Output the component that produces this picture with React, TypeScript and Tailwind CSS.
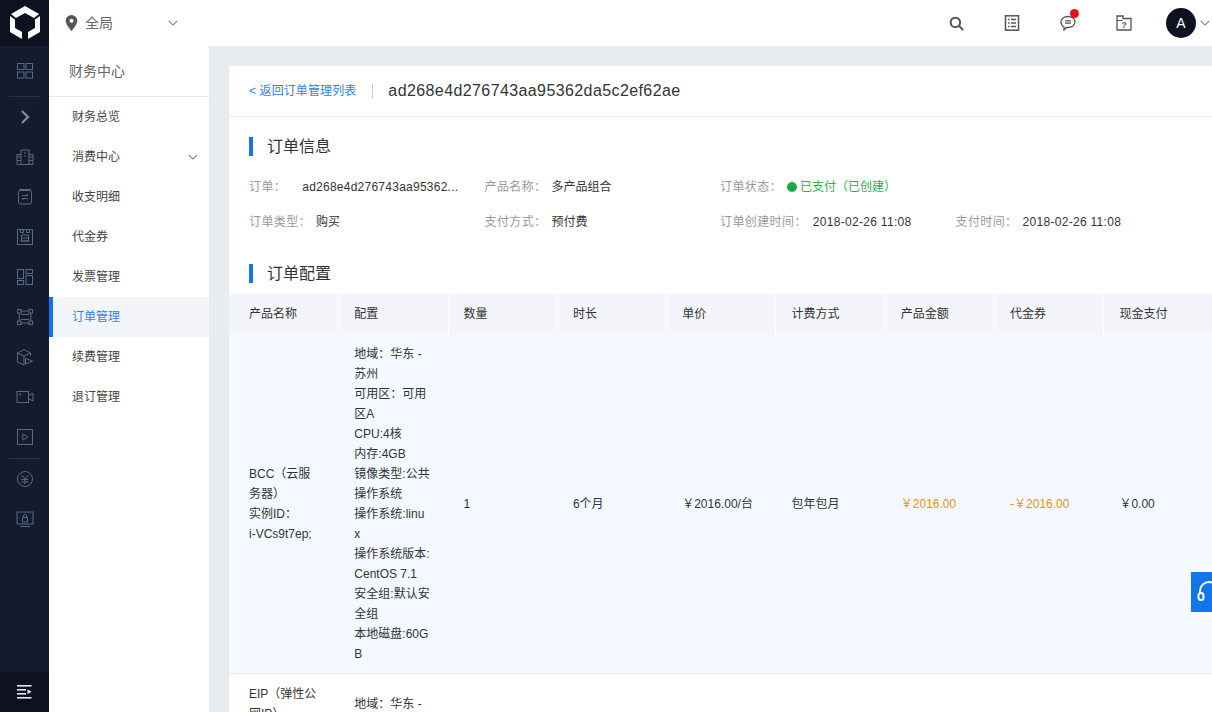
import React from "react";

const font = { fontFamily: '"Liberation Sans", "Noto Sans CJK SC", sans-serif' };

const S = ({ children, className = "w-[18px] h-[18px]" }: { children: React.ReactNode; className?: string }) => (
  <svg viewBox="0 0 18 18" fill="none" stroke="currentColor" strokeWidth="1" className={className}>
    {children}
  </svg>
);

const railIcons: React.ReactNode[] = [
  <S><rect x="1.5" y="1.5" width="6.5" height="6" /><rect x="10" y="1.5" width="6.5" height="6" /><rect x="1.5" y="10" width="6.5" height="6" /><rect x="10" y="10" width="6.5" height="6" /></S>,
  <S><path d="M1 16.5V6.5h4M17 16.5V6.5h-4M5 16.5V2h8v14.500M1 16.500h16M5 9H1M5 12.500H1M13 9h4M13 12.500h4M8 5h2M8 8h2" /></S>,
  <S><rect x="2.500" y="2.500" width="13" height="13.500" rx="2" /><path d="M3 1.500h12M6 7.500h6l-1.500-1.500M12 10.500H6l1.500 1.500" /></S>,
  <S><rect x="1.500" y="1.500" width="15" height="15" /><path d="M4.500 1.500v3h3v-3M10.500 1.500v3h3v-3M4.500 13h9M5.500 7h7v6h-7zM5.500 10h7" /></S>,
  <S><rect x="1.500" y="1.500" width="6" height="9" /><rect x="10" y="1.500" width="6.500" height="4" /><rect x="10" y="7.500" width="6.500" height="9" /><rect x="1.500" y="12.500" width="6" height="4" /></S>,
  <S><rect x="1.500" y="1.500" width="3.500" height="3.500" /><rect x="13" y="1.500" width="3.500" height="3.500" /><rect x="1.500" y="13" width="3.500" height="3.500" /><rect x="13" y="13" width="3.500" height="3.500" /><path d="M5 3h8M5 15h8M3.200 5v8M14.800 5v8M5 6.500h8M5 11.500h8" /></S>,
  <S><path d="M1.500 5L8 1.500 14.500 5 8 8zM1.500 5v9L8 17V8M14.500 5v3M9.500 10.500v5.500l7-3z" /></S>,
  <S><rect x="1" y="3.500" width="11.500" height="11" /><path d="M12.500 7.500l4.500-2.500v8l-4.500-2.500" /><circle cx="4" cy="6.500" r="0.700" /></S>,
  <S><rect x="1.500" y="1.500" width="15" height="15" /><path d="M6.800 5.800v6.400l5-3.200z" /></S>,
  <S><circle cx="9" cy="9" r="7.500" /><path d="M5.500 5L9 9l3.500-4M5.500 9.500h7M5.500 12h7M9 9v5" /></S>,
  <S><rect x="1" y="2" width="16" height="12" /><path d="M4 16.500h10M6.500 7.500h5v4.500h-5zM7.500 7.500V6a1.500 1.500 0 0 1 3 0v1.500" /></S>,
];

const subMenu = ["财务总览", "消费中心", "收支明细", "代金券", "发票管理", "订单管理", "续费管理", "退订管理"];

const heads = ["产品名称", "配置", "数量", "时长", "单价", "计费方式", "产品金额", "代金券", "现金支付"];
const configLines = ["地域：华东 -", "苏州", "可用区：可用", "区A", "CPU:4核", "内存:4GB", "镜像类型:公共", "操作系统", "操作系统:linu", "x", "操作系统版本:", "CentOS 7.1", "安全组:默认安", "全组", "本地磁盘:60G", "B"];

function Info({ label, value, className, valueClass = "text-[#333]" }: { label: string; value: React.ReactNode; className: string; valueClass?: string }) {
  return (
    <div className={`flex items-center whitespace-nowrap ${className}`}>
      <span className="text-[#999] tracking-[0.4px]">{label}</span>
      <span className={valueClass}>{value}</span>
    </div>
  );
}

function SectionTitle({ children }: { children: React.ReactNode }) {
  return (
    <div className="flex items-center gap-[14px] pl-5 h-[19px]">
      <span className="w-1 h-[19px] bg-[#1275ea]" />
      <span className="text-base text-[#333] leading-[19px]">{children}</span>
    </div>
  );
}

function Lines({ lines }: { lines: string[] }) {
  return (
    <>
      {lines.map((l, i) => (
        <div key={i} className="whitespace-nowrap">{l}</div>
      ))}
    </>
  );
}

export default function App() {
  const cellW = "w-[109.300px]";
  return (
    <div style={font} className="relative flex h-[712px] w-[1212px] overflow-hidden bg-[#e8ebef] text-xs text-[#333]">
      {/* rail */}
      <aside className="flex h-full w-[49px] shrink-0 flex-col bg-[#131b2e] text-[#5d6981]">
        <div className="flex h-[46px] items-center justify-center bg-[#0e1220]">
          <svg viewBox="0 0 32 34" className="h-[34px] w-[32px]" fill="#fff">
            <path d="M16 0L30 8 25 12 16 7 7 12 2 8z" />
            <path d="M1 10l5 3.500V22l7 4v7L1 26z" />
            <path d="M31 10l-5 3.500V22l-7 4v7l12-7z" />
          </svg>
        </div>
        <div className="flex h-[50px] items-center justify-center">{railIcons[0]}</div>
        <div className="mx-[9px] h-px bg-[#2a3346]" />
        <div className="flex h-10 items-center justify-center text-[#8790a3]">
          <svg viewBox="0 0 18 18" fill="none" stroke="currentColor" strokeWidth="2" className="h-[18px] w-[18px]"><path d="M6 3l6 6-6 6" /></svg>
        </div>
        {railIcons.slice(1, 9).map((ic, i) => (
          <div key={i} className="flex h-10 items-center justify-center">{ic}</div>
        ))}
        <div className="mx-[9px] mt-[1px] h-px bg-[#2a3346]" />
        {railIcons.slice(9).map((ic, i) => (
          <div key={i} className="flex h-10 items-center justify-center">{ic}</div>
        ))}
        <div className="mt-auto flex h-10 items-center justify-center bg-[#0e1220]">
          <svg viewBox="0 0 15 14" fill="#e4e7ec" className="h-[14px] w-[15px]">
            <rect x="0" y="0" width="14.500" height="1.600" />
            <rect x="0" y="4" width="9" height="1.600" />
            <rect x="0" y="8" width="9" height="1.600" />
            <rect x="0" y="12" width="14.500" height="1.600" />
            <path d="M10.500 4.200l4 2.500-4 2.500z" />
          </svg>
        </div>
      </aside>

      <div className="flex min-w-0 flex-1 flex-col">
        {/* top bar */}
        <header className="flex h-[46px] shrink-0 items-center bg-white">
          <div className="ml-[16px] flex items-center text-[#666]">
            <svg viewBox="0 0 14 18" fill="#555" className="h-4 w-[13px]"><path fillRule="evenodd" d="M7 0a6.500 6.500 0 0 1 6.500 6.500C13.500 11 7 18 7 18S.5 11 .5 6.500A6.500 6.500 0 0 1 7 0zm0 4.200a2.300 2.300 0 1 0 0 4.600 2.300 2.300 0 0 0 0-4.600z" /></svg>
            <span className="ml-[7px] text-sm">全局</span>
            <svg viewBox="0 0 12 8" fill="none" stroke="#777" strokeWidth="1.300" className="ml-[55px] h-2 w-[10px]"><path d="M1 1.500l5 5 5-5" /></svg>
          </div>
          <div className="ml-auto flex items-center text-[#555]">
            <svg viewBox="0 0 16 16" fill="none" stroke="#555" strokeWidth="2.200" className="h-[15px] w-[15px]"><circle cx="6.800" cy="6.800" r="5" /><path d="M10.500 10.500L15 15" /></svg>
            <svg viewBox="0 0 16 16" fill="none" stroke="#555" className="ml-[40px] h-4 w-4"><rect x="1.500" y="0.800" width="13" height="14.400" strokeWidth="1.500" /><path d="M4 4.500h1.500M7 4.500h5M4 8h1.500M7 8h5M4 11.500h1.500M7 11.500h5" strokeWidth="1.300" /></svg>
            <div className="relative ml-[40px] h-4 w-4">
              <svg viewBox="0 0 16 16" fill="none" stroke="#555" strokeWidth="1.300" className="h-4 w-4"><path d="M8 1.500c4 0 7 2.400 7 5.500s-3 5.500-7 5.500H6.500L4 15v-3C2 11 1 9 1 7c0-3.100 3-5.500 7-5.500z" /><path d="M5 5.800h6M5 8.200h6" /></svg>
              <span className="absolute left-[10px] top-[-6px] h-[9px] w-[9px] rounded-full bg-[#e60f1f]" />
            </div>
            <svg viewBox="0 0 16 16" fill="none" stroke="#555" className="ml-[40px] h-4 w-4"><path d="M1 15V1h6v2.500h8V15z" strokeWidth="1.300" /><path d="M1 5.500h5.500" strokeWidth="1" /><text x="8" y="13" fontSize="8.500" fill="#555" stroke="none" textAnchor="middle" fontWeight="700">?</text></svg>
            <span className="ml-[34px] flex h-[30px] w-[30px] items-center justify-center rounded-full bg-[#0e1220] text-sm text-white">A</span>
            <svg viewBox="0 0 12 8" fill="none" stroke="#777" strokeWidth="1.300" className="ml-[4px] mr-[2px] h-2 w-[10px]"><path d="M1 1.500l5 5 5-5" /></svg>
          </div>
        </header>

        <div className="flex min-h-0 flex-1">
          {/* side menu */}
          <nav className="w-[161px] shrink-0 border-r border-[#e6e9ed] bg-white">
            <div className="flex h-[51px] items-center border-b border-[#e6e9ed] pl-5 text-sm text-[#666]">财务中心</div>
            {subMenu.map((m, i) => (
              <div
                key={m}
                className={
                  m === "订单管理"
                    ? "flex h-10 items-center border-l-4 border-[#1275ea] bg-[#f3f5fa] pl-[19px] text-[#2f80f0]"
                    : "flex h-10 items-center pl-[23px] text-[#444]"
                }
              >
                {m}
                {i === 1 && (
                  <svg viewBox="0 0 12 8" fill="none" stroke="#777" strokeWidth="1.300" className="ml-auto mr-[11px] h-2 w-[10px]"><path d="M1 1.500l5 5 5-5" /></svg>
                )}
              </div>
            ))}
          </nav>

          {/* content */}
          <main className="min-w-0 flex-1 overflow-hidden pl-[19px] pt-5">
            <div className="bg-white">
              <div className="flex h-[51px] items-center border-b border-[#e8ebef] pl-5">
                <span className="text-[#2f80f0] tracking-[0.1px]">&lt; 返回订单管理列表</span>
                <span className="ml-4 h-[15px] w-px bg-[#ccc]" />
                <span className="ml-[15px] text-base text-[#333] tracking-[0.4px]">ad268e4d276743aa95362da5c2ef62ae</span>
              </div>
              <div className="h-[20px]" />
              <SectionTitle>订单信息</SectionTitle>
              <div className="mt-[23px] flex h-[16px] pl-5">
                <Info className="w-[235.500px]" label="订单：" value="ad268e4d276743aa95362..." valueClass="ml-[16px] text-[#333] tracking-[0.25px]" />
                <Info className="w-[235.500px]" label="产品名称：" value="多产品组合" valueClass="ml-[5px] text-[#333]" />
                <Info
                  className="flex-1"
                  label="订单状态："
                  valueClass="ml-[5px] text-[#27b14f]"
                  value={
                    <span className="flex items-center">
                      <span className="mr-[3px] h-[10px] w-[10px] rounded-full bg-[#1fa846]" />
                      已支付（已创建）
                    </span>
                  }
                />
              </div>
              <div className="mt-[19px] flex h-[16px] pl-5">
                <Info className="w-[235.500px]" label="订单类型：" value="购买" valueClass="ml-[5px]" />
                <Info className="w-[235.500px]" label="支付方式：" value="预付费" valueClass="ml-[5px]" />
                <Info className="w-[235.500px]" label="订单创建时间：" value="2018-02-26 11:08" valueClass="ml-[6px] text-[#333] tracking-[0.3px]" />
                <Info className="flex-1" label="支付时间：" value="2018-02-26 11:08" valueClass="ml-[5px] text-[#333] tracking-[0.3px]" />
              </div>
              <div className="h-[34px]" />
              <SectionTitle>订单配置</SectionTitle>
              <div className="h-[11px]" />
              <div className="flex h-10 items-center bg-[#f3f5fa]">
                {heads.map((h, i) => (
                  <div key={h} className={`flex h-10 shrink-0 items-center ${cellW} ${i ? "border-l border-white pl-[15px]" : "pl-5"}`}>{h}</div>
                ))}
              </div>
              <div className="flex h-[340px] items-center border-b border-[#e8ebef] bg-[#f3f9ff] leading-5">
                <div className={`${cellW} shrink-0 pl-5`}><Lines lines={["BCC（云服", "务器）", "实例ID：", "i-VCs9t7ep;"]} /></div>
                <div className={`${cellW} shrink-0 pl-4`}><Lines lines={configLines} /></div>
                <div className={`${cellW} shrink-0 pl-4`}>1</div>
                <div className={`${cellW} shrink-0 pl-4`}>6个月</div>
                <div className={`${cellW} shrink-0 pl-4`}>￥2016.00/台</div>
                <div className={`${cellW} shrink-0 pl-4`}>包年包月</div>
                <div className={`${cellW} shrink-0 pl-4 text-[#f39000]`}>￥2016.00</div>
                <div className={`${cellW} shrink-0 pl-4 text-[#f39000]`}>-￥2016.00</div>
                <div className={`${cellW} shrink-0 pl-4`}>￥0.00</div>
              </div>
              <div className="flex h-[60px] leading-5">
                <div className={`${cellW} shrink-0 pl-5 pt-[10px]`}><Lines lines={["EIP（弹性公", "网IP）"]} /></div>
                <div className={`${cellW} shrink-0 pl-4 pt-[20px]`}><Lines lines={["地域：华东 -", "苏州"]} /></div>
              </div>
            </div>
          </main>
        </div>
      </div>

      {/* floating help */}
      <div className="absolute left-[1191px] top-[572px] flex h-10 w-[21px] items-center overflow-hidden bg-[#1275ea]">
        <svg viewBox="0 0 24 24" fill="none" stroke="#fff" strokeWidth="2" className="ml-[6px] h-6 w-6 shrink-0"><path d="M3 14V11a9 9 0 0 1 18 0v3" /><rect x="1.500" y="13" width="5" height="7" rx="2.500" /></svg>
      </div>
    </div>
  );
}
